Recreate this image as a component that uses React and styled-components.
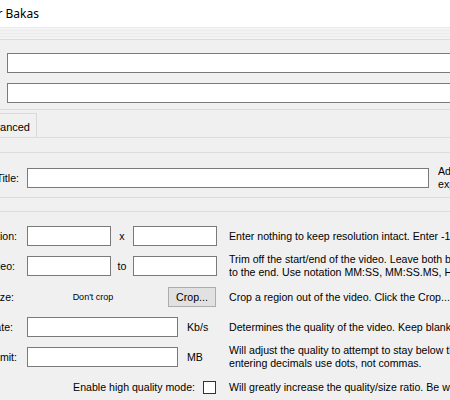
import React from 'react';
import styled, { createGlobalStyle } from 'styled-components';

const GlobalStyle = createGlobalStyle`
  html, body { margin: 0; padding: 0; background: #f0f0f0; overflow: hidden; }
  body { font-family: "Liberation Sans", Arial, sans-serif; }
`;

const Window = styled.div`
  width: 450px;
  height: 400px;
  overflow: hidden;
  background: #f0f0f0;
  display: flex;
  flex-direction: column;
  font-family: "Liberation Sans", Arial, sans-serif;
  font-size: 10.6px;
  color: #000;
`;

const TitleBar = styled.div`
  height: 27px;
  flex: none;
  background: #fff;
  display: flex;
  align-items: center;
`;

const Clip = styled.div`
  width: ${(p) => p.$w}px;
  flex: none;
  display: flex;
  justify-content: flex-end;
  overflow: hidden;
  white-space: nowrap;
`;

const TitleText = styled.span`
  font-family: "Noto Sans", "Open Sans", sans-serif;
  font-size: 12px;
  line-height: 16px;
  color: #000;
`;

const TopStrip = styled.div`
  height: 12px;
  flex: none;
  background: repeating-linear-gradient(to bottom, #ebebeb 0 1px, #f3f3f3 1px 3px);
  border-bottom: 1px solid #dcdcdc;
`;

const Files = styled.div`
  flex: none;
  display: flex;
  flex-direction: column;
  gap: 10px;
  padding: 13px 0 6px 7px;
  border-bottom: 1px solid #dcdcdc;
  overflow: hidden;
`;

const TextBox = styled.div`
  flex: none;
  box-sizing: border-box;
  height: 20px;
  width: ${(p) => p.$w}px;
  background: #fff;
  border: 1px solid #7a7a7a;
`;

const TabStrip = styled.div`
  flex: none;
  display: flex;
  padding-top: 3px;
`;

const Tab = styled.div`
  box-sizing: border-box;
  height: 24px;
  padding: 3px 6px 0 6px;
  display: flex;
  align-items: center;
  border-top: 1px solid #d9d9d9;
  border-right: 1px solid #d9d9d9;
  background: #f0f0f0;
  font-size: 11px;
  white-space: nowrap;
`;

const TabPage = styled.div`
  flex: 1;
  display: flex;
  flex-direction: column;
  border-top: 1px solid #dcdcdc;
`;

const Rule = styled.div`
  flex: none;
  height: 1px;
  background: #dcdcdc;
  margin-top: ${(p) => p.$mt}px;
`;

const TitleRow = styled.div`
  margin-top: 15px;
  display: grid;
  grid-template-columns: 27px 402px 1fr;
  grid-template-rows: 20px;
  align-items: center;
  height: 20px;
`;

const Rows = styled.div`
  margin-top: 14px;
  display: flex;
  flex-direction: column;
  gap: 10px;
`;

const Row = styled.div`
  box-sizing: border-box;
  display: grid;
  grid-template-columns: 27px 202px 1fr;
  grid-template-rows: 20px;
  align-items: center;
  height: ${(p) => 20 + (p.$pt || 0)}px;
  padding-top: ${(p) => p.$pt || 0}px;
`;

const Label = styled.div`
  display: flex;
  justify-content: flex-end;
  overflow: hidden;
  white-space: nowrap;
  padding-right: ${(p) => 27 - (p.$end || 18)}px;
  line-height: 13px;
`;

const Field = styled.div`
  display: flex;
  align-items: center;
  justify-content: ${(p) => (p.$end ? 'flex-end' : 'flex-start')};
  padding-right: ${(p) => (p.$end ? 13 : 0)}px;
  height: 20px;
`;

const Between = styled.span`
  width: 22px;
  text-align: center;
  flex: none;
`;

const Unit = styled.span`
  margin-left: 9px;
`;

const CropState = styled.span`
  width: 132px;
  margin-right: 9px;
  text-align: center;
  font-size: 9px;
  flex: none;
`;

const Button = styled.div`
  box-sizing: border-box;
  width: 48px;
  height: 20px;
  background: #e1e1e1;
  border: 1px solid #adadad;
  display: flex;
  align-items: center;
  justify-content: center;
  flex: none;
`;

const CheckLabel = styled.span`
  margin-right: 8px;
  white-space: nowrap;
`;

const CheckBox = styled.div`
  box-sizing: border-box;
  width: 13px;
  height: 13px;
  background: #fff;
  border: 1px solid #333;
  flex: none;
`;

const Desc = styled.div`
  height: 20px;
  display: flex;
  flex-direction: column;
  justify-content: center;
  white-space: nowrap;
  line-height: 13px;
  padding-left: ${(p) => p.$pl || 0}px;
`;

const Line = styled.span`
  flex: none;
  display: block;
`;

export default function App() {
  return (
    <>
      <GlobalStyle />
      <Window>
        <TitleBar>
          <Clip $w={39}>
            <TitleText>WebM for Bakas</TitleText>
          </Clip>
        </TitleBar>
        <TopStrip />
        <Files>
          <TextBox $w={460} />
          <TextBox $w={460} />
        </Files>
        <TabStrip>
          <Clip $w={37}>
            <Tab>Advanced</Tab>
          </Clip>
        </TabStrip>
        <TabPage>
          <Rule $mt={14} />
          <TitleRow>
            <Label $end={19}>Title:</Label>
            <TextBox $w={402} />
            <Desc $pl={9}>
              <Line>Adds a title to the metadata of the</Line>
              <Line>exported file.</Line>
            </Desc>
          </TitleRow>
          <Rule $mt={9} />
          <Rule $mt={13} />
          <Rows>
            <Row>
              <Label $end={17}>Resolution:</Label>
              <Field>
                <TextBox $w={84} />
                <Between>x</Between>
                <TextBox $w={84} />
              </Field>
              <Desc>
                <Line>Enter nothing to keep resolution intact. Enter -1 to keep aspect ratio.</Line>
              </Desc>
            </Row>
            <Row>
              <Label $end={15}>Trim video:</Label>
              <Field>
                <TextBox $w={84} />
                <Between>to</Between>
                <TextBox $w={84} />
              </Field>
              <Desc>
                <Line>Trim off the start/end of the video. Leave both blank to keep from start</Line>
                <Line>to the end. Use notation MM:SS, MM:SS.MS, HH:MM:SS or HH:MM:SS.MS</Line>
              </Desc>
            </Row>
            <Row $pt={1}>
              <Label $end={14}>Crop size:</Label>
              <Field>
                <CropState>Don't crop</CropState>
                <Button>Crop...</Button>
              </Field>
              <Desc>
                <Line>Crop a region out of the video. Click the Crop... button to select a region.</Line>
              </Desc>
            </Row>
            <Row>
              <Label $end={13}>Bitrate:</Label>
              <Field>
                <TextBox $w={151} />
                <Unit>Kb/s</Unit>
              </Field>
              <Desc>
                <Line>Determines the quality of the video. Keep blank to let the program decide.</Line>
              </Desc>
            </Row>
            <Row>
              <Label $end={17}>Size limit:</Label>
              <Field>
                <TextBox $w={151} />
                <Unit>MB</Unit>
              </Field>
              <Desc>
                <Line>Will adjust the quality to attempt to stay below this limit. When</Line>
                <Line>entering decimals use dots, not commas.</Line>
              </Desc>
            </Row>
            <Row>
              <Label />
              <Field $end>
                <CheckLabel>Enable high quality mode:</CheckLabel>
                <CheckBox />
              </Field>
              <Desc>
                <Line>Will greatly increase the quality/size ratio. Be warned, this is slow.</Line>
              </Desc>
            </Row>
          </Rows>
        </TabPage>
      </Window>
    </>
  );
}
